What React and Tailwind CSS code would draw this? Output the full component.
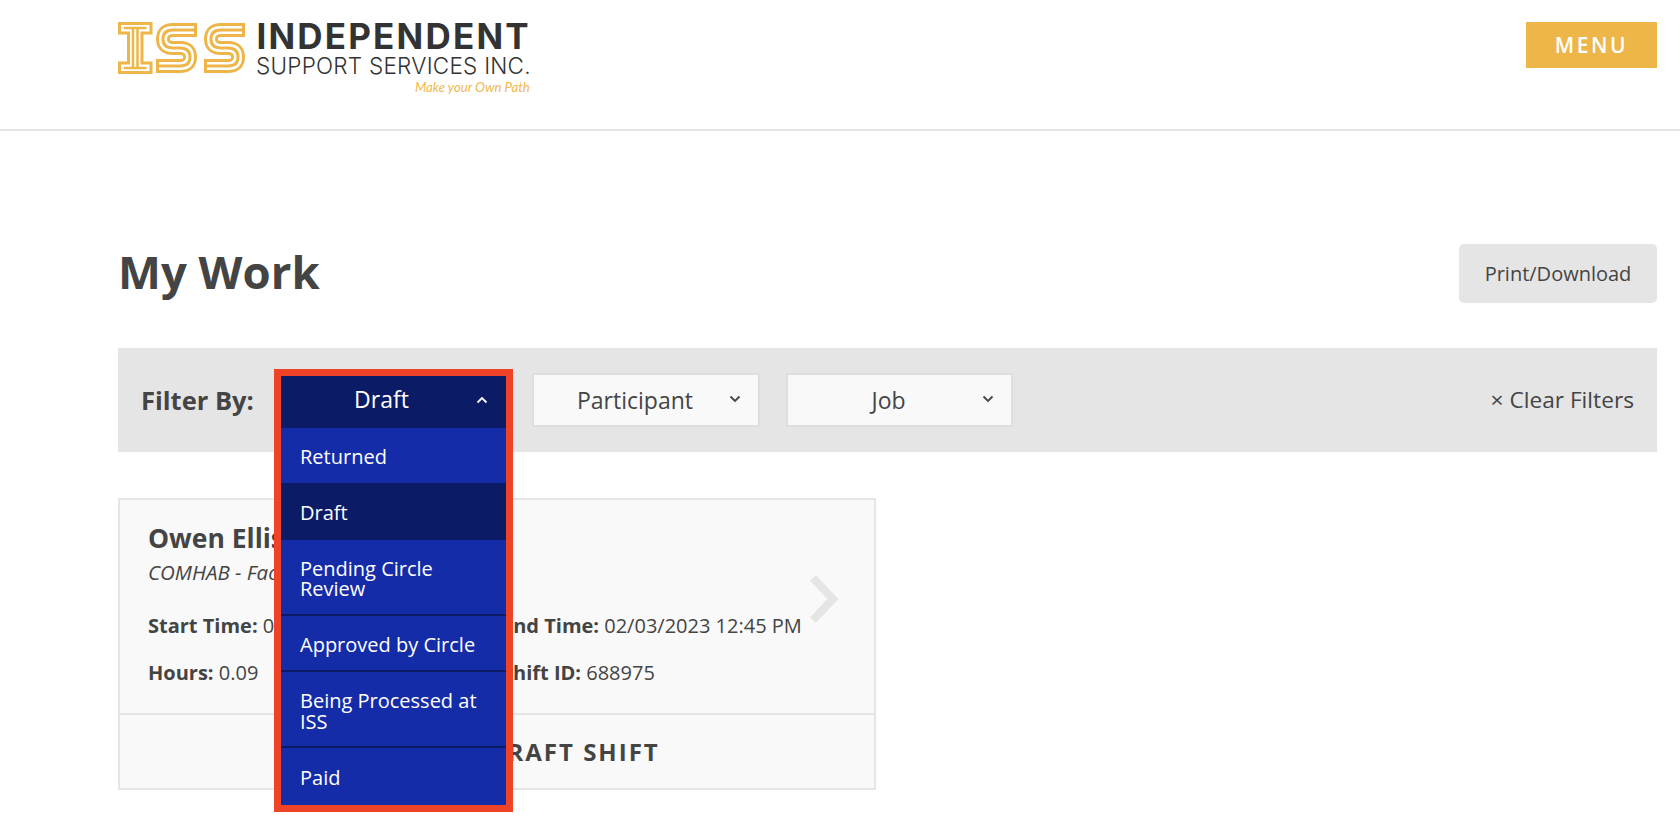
import React from 'react';

const font = { fontFamily: '"Open Sans", sans-serif' };

function Chevron({ up, className }) {
  return (
    <svg width="12" height="8" viewBox="0 0 12 8" className={className} fill="none" stroke="currentColor" strokeWidth="1.8">
      <path d={up ? 'M1.5 6.5 L6 2 L10.5 6.5' : 'M1.5 1.5 L6 6 L10.5 1.5'} />
    </svg>
  );
}

function IssMark() {
  const s = 'M41 7 H17 Q7 7 7 16 Q7 25 17 25 H24 Q34 25 34 34 Q34 43 24 43 H0';
  const layers = (
    <>
      <path d={s} stroke="#eeb648" strokeWidth="14" />
      <path d={s} stroke="#fff" strokeWidth="8" />
      <path d={s} stroke="#eeb648" strokeWidth="3" />
      <path d="M39.5 0 V14 M1.5 36 V50" stroke="#eeb648" strokeWidth="3" />
    </>
  );
  return (
    <svg width="128" height="52" viewBox="0 0 128 52" fill="none" className="shrink-0">
      <path d="M1.5 1.5 H33 V11 H24 V41 H33 V50.5 H1.5 V41 H10.5 V11 H1.5 Z" stroke="#eeb648" strokeWidth="3" />
      <path d="M6 6 H28.5 M6 46 H28.5 M15 6 V46 M19.5 6 V46" stroke="#eeb648" strokeWidth="2.5" />
      <g transform="translate(38 1)">{layers}</g>
      <g transform="translate(86 1)">{layers}</g>
    </svg>
  );
}

function Select({ label }) {
  return (
    <div className="relative flex h-[54px] items-center justify-center border-2 border-[#dedede] bg-[#f9f9f9] pr-[22px] text-[23px] text-[#444444]">
      <span>{label}</span>
      <Chevron className="absolute right-[17px] top-[20px] text-[#444444]" />
    </div>
  );
}

export default function App() {
  const rows = [
    { t: 'Returned', h: 'h-[55px] pt-[3px]' },
    { t: 'Draft', h: 'h-[57px] pt-[3px]', active: true },
    { t: 'Pending Circle Review', h: 'h-[76px] pt-[4px]', line: true },
    { t: 'Approved by Circle', h: 'h-[56px] pt-[5px]', line: true },
    { t: 'Being Processed at ISS', h: 'h-[76px] pt-[5px]', line: true },
    { t: 'Paid', h: 'h-[57px] pt-[3px]' },
  ];
  return (
    <div style={font} className="h-[826px] overflow-hidden bg-white text-[#444444]">
      <header className="flex h-[131px] items-start justify-between border-b-2 border-[#e5e5e5] pl-[118px] pr-[23px] pt-[22px]">
        <div className="flex gap-[10px]">
          <IssMark />
          <div className="mt-[-3px] flex flex-col items-end">
            <div style={{ fontFamily: 'Inter, sans-serif' }} className="h-[35px] text-[35px] font-bold leading-[34px] tracking-[2.2px] text-[#333333]">INDEPENDENT</div>
            <div style={{ fontFamily: 'Inter, sans-serif' }} className="h-[24px] text-[22.5px] font-light leading-[24px] tracking-[0.25px] text-[#333333]">SUPPORT SERVICES INC.</div>
            <div style={{ fontFamily: 'Lato, sans-serif' }} className="mr-[1px] text-[13.2px] italic leading-[18px] text-[#efb84d]">Make your Own Path</div>
          </div>
        </div>
        <button className="flex h-[46px] w-[131px] items-center justify-center bg-[#eeb648] pt-[2px] text-[21px] font-semibold tracking-[2.6px] text-white">MENU</button>
      </header>

      <main className="px-[23px] pl-[118px]">
        <div className="flex items-center justify-between pt-[113px]">
          <h1 className="mt-[-6px] text-[45.5px] font-bold leading-[58px] text-[#444444]">My Work</h1>
          <button className="flex h-[59px] w-[198px] items-center justify-center rounded-[5px] bg-[#e5e5e5] text-[20px] text-[#444444]">Print/Download</button>
        </div>

        <div className="mt-[45px] flex h-[104px] items-center justify-between bg-[#e5e5e5] pl-[23px] pr-[23px]">
          <div className="flex items-center">
            <span className="w-[140px] text-[25.5px] font-bold">Filter By:</span>
            <div className="relative z-10 h-[52px] w-[225px]">
              <div className="absolute left-[-7px] top-[-5px] w-[239px] border-[7px] border-[#ee4327] text-white">
                <div className="relative flex h-[52px] items-center justify-center bg-[#0c1b66] pb-[5px] pr-6 text-[23px]">
                  <span>Draft</span>
                  <Chevron up className="absolute right-[18px] top-[20px] text-white" />
                </div>
                {rows.map((r) => (
                  <div key={r.t} className={`flex items-center pl-[19px] pr-5 text-[20px] leading-[20.5px] ${r.h} ${r.active ? 'bg-[#0c1b66]' : 'bg-[#152ca8]'} ${r.line ? 'border-b-2 border-[#0c1b66]' : ''}`}>
                    <span>{r.t}</span>
                  </div>
                ))}
              </div>
            </div>
            <div className="ml-[26px] w-[228px]"><Select label="Participant" /></div>
            <div className="ml-[26px] w-[227px]"><Select label="Job" /></div>
          </div>
          <span className="text-[22.7px]">× Clear Filters</span>
        </div>

        <section className="mt-[46px] flex h-[292px] w-[758px] flex-col border-2 border-[#e5e5e5] bg-[#f9f9f9]">
          <div className="relative h-[215px] border-b-2 border-[#e5e5e5] px-[28px] pt-[20px]">
            <div className="text-[26.5px] font-bold leading-[36px]">Owen Ellis</div>
            <div className="mt-[2px] text-[20.5px] italic leading-[28px]">COMHAB - Facilitation</div>
            <div className="mt-[26px] grid grid-cols-[354px_1fr] text-[20px] leading-[28px]">
              <div><b>Start Time:</b> 02/03/2023 12:40 PM</div>
              <div><b>End Time:</b> 02/03/2023 12:45 PM</div>
            </div>
            <div className="mt-[19px] grid grid-cols-[354px_1fr] text-[20px] leading-[28px]">
              <div><b>Hours:</b> 0.09</div>
              <div><b>Shift ID:</b> 688975</div>
            </div>
            <svg width="30" height="48" viewBox="0 0 30 48" fill="none" className="absolute right-[35px] top-[75px]">
              <path d="M4 3 L24 24 L4 45" stroke="#e5e5e5" strokeWidth="8" />
            </svg>
          </div>
          <div className="flex flex-1 items-center justify-center pl-[4px] text-[24px] font-bold tracking-[2px]">VIEW/EDIT DRAFT SHIFT</div>
        </section>
      </main>
    </div>
  );
}
